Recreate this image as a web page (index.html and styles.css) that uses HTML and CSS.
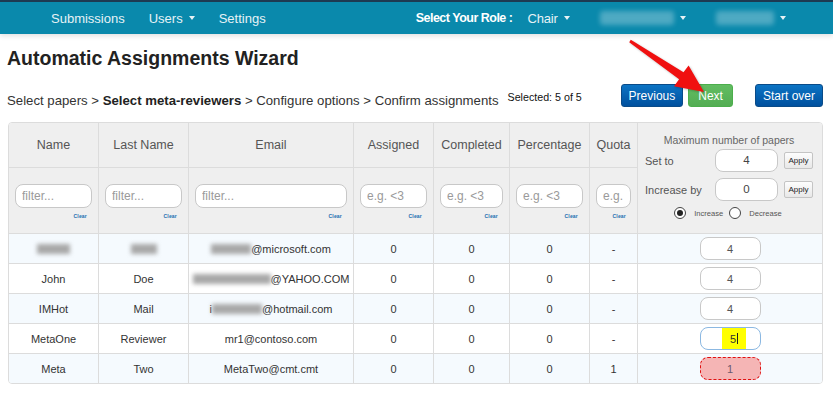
FILE: index.html
```html
<!DOCTYPE html>
<html lang="en">
<head>
<meta charset="utf-8">
<title>Automatic Assignments Wizard</title>
<link rel="stylesheet" href="styles.css">
</head>
<body>
<header class="topbar">
  <nav class="nav">
    <div class="nav-left">
      <a class="nav-item">Submissions</a>
      <a class="nav-item">Users<span class="caret"></span></a>
      <a class="nav-item">Settings</a>
    </div>
    <div class="nav-right">
      <span class="role-label">Select Your Role :</span>
      <a class="nav-item">Chair<span class="caret"></span></a>
      <a class="nav-item nav-gap"><span class="blur-pill pill-a"></span><span class="caret"></span></a>
      <a class="nav-item nav-gap"><span class="blur-pill pill-b"></span><span class="caret"></span></a>
    </div>
  </nav>
</header>

<main class="page">
  <h1>Automatic Assignments Wizard</h1>
  <div class="steps-row">
    <div class="steps">Select papers &gt; <b>Select meta-reviewers</b> &gt; Configure options &gt; Confirm assignments</div>
    <span class="selected">Selected: 5 of 5</span>
    <div class="actions">
      <button class="btn btn-blue">Previous</button>
      <button class="btn btn-green">Next</button>
      <button class="btn btn-blue btn-start">Start over</button>
    </div>
  </div>

  <div class="table-wrap">
    <table class="grid">
      <colgroup>
        <col class="c-name"><col class="c-last"><col class="c-email"><col class="c-assigned">
        <col class="c-completed"><col class="c-pct"><col class="c-quota"><col class="c-max">
      </colgroup>
      <thead>
        <tr class="head-row">
          <th>Name</th>
          <th>Last Name</th>
          <th>Email</th>
          <th>Assigned</th>
          <th>Completed</th>
          <th>Percentage</th>
          <th>Quota</th>
          <th rowspan="2" class="max-cell">
            <div class="max-title">Maximum number of papers</div>
            <div class="max-line">
              <span class="max-label">Set to</span>
              <span class="num-box">4</span>
              <span class="apply">Apply</span>
            </div>
            <div class="max-line">
              <span class="max-label">Increase by</span>
              <span class="num-box">0</span>
              <span class="apply">Apply</span>
            </div>
            <div class="radio-line">
              <span class="radio checked"></span><span class="radio-text">Increase</span>
              <span class="radio"></span><span class="radio-text">Decrease</span>
            </div>
          </th>
        </tr>
        <tr class="filter-row">
          <th><input class="filter" placeholder="filter..."><div class="clear">Clear</div></th>
          <th><input class="filter" placeholder="filter..."><div class="clear">Clear</div></th>
          <th><input class="filter" placeholder="filter..."><div class="clear">Clear</div></th>
          <th><input class="filter" placeholder="e.g. &lt;3"><div class="clear">Clear</div></th>
          <th><input class="filter" placeholder="e.g. &lt;3"><div class="clear">Clear</div></th>
          <th><input class="filter" placeholder="e.g. &lt;3"><div class="clear">Clear</div></th>
          <th><input class="filter" placeholder="e.g. &lt;3"><div class="clear">Clear</div></th>
        </tr>
      </thead>
      <tbody>
        <tr class="alt">
          <td><span class="blur b-name"></span></td>
          <td><span class="blur b-last"></span></td>
          <td><span class="blur b-mail1"></span>@microsoft.com</td>
          <td>0</td><td>0</td><td>0</td><td>-</td>
          <td><span class="quota">4</span></td>
        </tr>
        <tr>
          <td>John</td>
          <td>Doe</td>
          <td><span class="blur b-mail2"></span>@YAHOO.COM</td>
          <td>0</td><td>0</td><td>0</td><td>-</td>
          <td><span class="quota">4</span></td>
        </tr>
        <tr class="alt">
          <td>IMHot</td>
          <td>Mail</td>
          <td>i<span class="blur b-mail3"></span>@hotmail.com</td>
          <td>0</td><td>0</td><td>0</td><td>-</td>
          <td><span class="quota">4</span></td>
        </tr>
        <tr>
          <td>MetaOne</td>
          <td>Reviewer</td>
          <td>mr1@contoso.com</td>
          <td>0</td><td>0</td><td>0</td><td>-</td>
          <td><span class="quota focus"><span class="hl">5<span class="cursor"></span></span></span></td>
        </tr>
        <tr class="alt">
          <td>Meta</td>
          <td>Two</td>
          <td>MetaTwo@cmt.cmt</td>
          <td>0</td><td>0</td><td>0</td><td>1</td>
          <td><span class="quota invalid">1</span></td>
        </tr>
      </tbody>
    </table>
  </div>
</main>

<svg class="callout-arrow" width="833" height="120" viewBox="0 0 833 120" aria-hidden="true">
  <polygon points="630.8,39.8 683.5,72.3 688.6,65.4 704,92 674,86.2 679.1,79.3 629.2,42.2" fill="#f01010"/>
</svg>
</body>
</html>
```

FILE: styles.css
```css
* { box-sizing: border-box; }

html, body { margin: 0; padding: 0; }

body {
  position: relative;
  font-family: "Liberation Sans", Arial, sans-serif;
  color: #333;
  background: #fff;
}

/* ---------- top bar ---------- */
.topbar {
  height: 34px;
  background: #0a89ac;
  border-top: 2px solid #1d3a52;
  box-shadow: 0 2px 5px rgba(0, 0, 0, 0.12);
}

.nav {
  display: flex;
  align-items: center;
  height: 32px;
  padding-left: 51px;
  font-size: 13px;
  color: #e6f2f6;
}

.nav-left {
  display: flex;
  align-items: center;
  gap: 24px;
}

.nav-right {
  display: flex;
  align-items: center;
  margin-left: 150px;
}

.nav-item {
  display: flex;
  align-items: center;
}

.role-label {
  font-weight: bold;
  font-size: 12.5px;
  letter-spacing: -0.5px;
  color: #fff;
  margin-right: 15px;
}

.nav-right .nav-item {
  font-size: 13px;
  letter-spacing: -0.2px;
}

.nav-gap { margin-left: 30px; }

.caret {
  width: 0;
  height: 0;
  margin-left: 6px;
  border-left: 3.5px solid transparent;
  border-right: 3.5px solid transparent;
  border-top: 4px solid currentColor;
}

.blur-pill {
  height: 14px;
  background: rgba(255, 255, 255, 0.28);
  border-radius: 3px;
  filter: blur(2.5px);
}

.pill-a { width: 74px; }
.pill-b { width: 58px; }

/* ---------- page ---------- */
.page {
  padding: 0 10px 0 8px;
}

h1 {
  margin: 13px 0 0 -1px;
  font-size: 19.5px;
  line-height: 22px;
  font-weight: bold;
  color: #222;
}

.steps-row {
  display: flex;
  align-items: flex-end;
  height: 23px;
  margin-top: 15px;
}

.steps {
  margin-left: -1px;
  margin-bottom: -2px;
  font-size: 13.2px;
  line-height: 16px;
  color: #333;
  white-space: nowrap;
}

.steps b { color: #222; }

.selected {
  margin-left: 9px;
  margin-bottom: 4px;
  font-size: 10.7px;
  line-height: 12px;
  color: #111;
  white-space: nowrap;
}

.actions {
  display: flex;
  align-items: center;
  gap: 5px;
  margin-left: auto;
}

.btn {
  height: 23px;
  padding: 0 7px;
  font-family: inherit;
  font-size: 12px;
  color: #fff;
  border-radius: 3px;
  cursor: pointer;
}

.btn-blue {
  border: 1px solid #0a4b88;
  background: linear-gradient(#0c74c4, #00509e);
}

.btn-green {
  padding: 0 9px;
  border: 1px solid #4cae4c;
  background: linear-gradient(#62bd62, #53ad53);
}

.btn-start { margin-left: 17px; }

/* ---------- table ---------- */
.table-wrap {
  margin-top: 15px;
  width: 815px;
  border: 1px solid #dcdcdc;
  border-radius: 4px;
  overflow: hidden;
}

.grid {
  width: 813px;
  table-layout: fixed;
  border-collapse: separate;
  border-spacing: 0;
  font-size: 11px;
}

.c-name { width: 89px; }
.c-last { width: 90px; }
.c-email { width: 165px; }
.c-assigned { width: 80px; }
.c-completed { width: 76px; }
.c-pct { width: 80px; }
.c-quota { width: 48px; }
.c-max { width: 185px; }

.grid th,
.grid td {
  padding: 0;
  border-left: 1px solid #dcdcdc;
  border-top: 1px solid #dcdcdc;
  text-align: center;
  vertical-align: middle;
}

.grid tr > :first-child { border-left: none; }
.head-row > th { border-top: none; }
.filter-row > th:first-child { border-left: none; }

.grid th {
  background: #efefef;
  font-weight: normal;
  font-size: 12.5px;
  color: #555;
}

.head-row { height: 44px; }

.filter-row { height: 66px; }

.filter-row th {
  vertical-align: top;
  padding: 16px 6px 0 6px;
}

.filter {
  display: block;
  width: 100%;
  height: 24px;
  padding: 0 6px;
  font-family: inherit;
  font-size: 12px;
  color: #555;
  background: #fff;
  border: 1px solid #c8c8c8;
  border-radius: 8px;
  outline: none;
}

.filter::placeholder { color: #9a9a9a; }

.clear {
  margin-top: 4px;
  padding-right: 5px;
  text-align: right;
  font-size: 5px;
  line-height: 8px;
  font-weight: bold;
  letter-spacing: 0.2px;
  color: #1b6eb0;
}

/* max column */
.grid th.max-cell {
  vertical-align: top;
  padding: 11px 9px 0 7px;
  font-size: 10.5px;
  color: #555;
}

.max-title {
  height: 15px;
  line-height: 12px;
  text-align: center;
  color: #666;
}

.max-line {
  display: flex;
  align-items: center;
  height: 23px;
  margin-bottom: 6px;
}

.max-label {
  width: 70px;
  text-align: left;
  font-size: 11px;
  color: #555;
}

.num-box {
  width: 63px;
  height: 23px;
  line-height: 21px;
  font-size: 11.5px;
  color: #444;
  text-align: center;
  background: #fff;
  border: 1px solid #c8c8c8;
  border-radius: 8px;
}

.apply {
  width: 29px;
  height: 17px;
  margin-left: 6px;
  line-height: 15px;
  font-size: 8px;
  color: #222;
  text-align: center;
  background: linear-gradient(#fdfdfd, #e8e8e8);
  border: 1px solid #c4c4c4;
  border-radius: 2px;
}

.radio-line {
  display: flex;
  align-items: center;
  justify-content: center;
  height: 12px;
  margin-left: 4px;
}

.radio {
  position: relative;
  width: 12px;
  height: 12px;
  border: 1px solid #444;
  border-radius: 50%;
  background: #fff;
}

.radio.checked::after {
  content: "";
  position: absolute;
  left: 2px;
  top: 2px;
  width: 6px;
  height: 6px;
  border-radius: 50%;
  background: #222;
}

.radio-text {
  margin: 0 6px 0 8px;
  font-size: 7.6px;
  color: #555;
}

/* body rows */
.grid tbody tr { height: 30px; }

.grid td { color: #333; background: #fff; }

.grid tr.alt td { background: #f5fafe; }

.blur {
  display: inline-block;
  height: 10px;
  vertical-align: -1px;
  background: #a8a8a8;
  filter: blur(2px);
}

.b-name { width: 33px; }
.b-last { width: 26px; }
.b-mail1 { width: 40px; }
.b-mail2 { width: 78px; }
.b-mail3 { width: 50px; }

.quota {
  display: inline-flex;
  align-items: center;
  justify-content: center;
  width: 61px;
  height: 23px;
  vertical-align: middle;
  font-size: 11px;
  color: #555;
  background: #fff;
  border: 1px solid #c8c8c8;
  border-radius: 8px;
}

.quota.focus {
  border-color: #8bb8e2;
}

.hl {
  display: inline-flex;
  align-items: center;
  justify-content: center;
  width: 24px;
  height: 21px;
  margin-left: 8px;
  background: #ffff00;
  color: #333;
}

.cursor {
  display: inline-block;
  width: 1px;
  height: 11px;
  margin-left: 1px;
  background: #222;
}

.quota.invalid {
  background: #f5b5b5;
  border: 1px dashed #e01010;
  color: #6a5a70;
}

/* annotation arrow */
.callout-arrow {
  position: absolute;
  left: 0;
  top: 0;
  pointer-events: none;
  filter: drop-shadow(1px 1px 1px rgba(0, 0, 0, 0.25));
}
```
